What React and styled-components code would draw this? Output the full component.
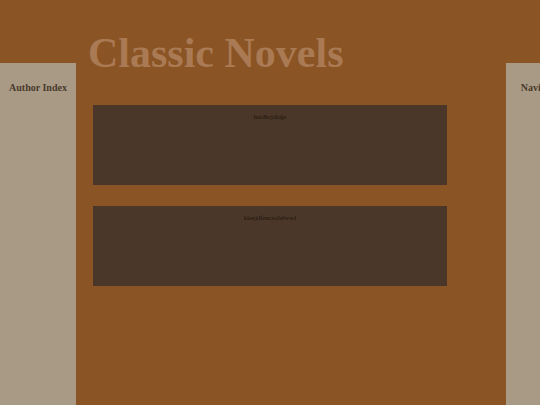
import React from "react";
import styled, { createGlobalStyle } from "styled-components";

const Global = createGlobalStyle`
  html, body {
    margin: 0;
    padding: 0;
    background: #8b5424;
    overflow: hidden;
  }
  body {
    font-family: "Liberation Serif", "Times New Roman", serif;
  }
`;

const Page = styled.div`
  display: flex;
  flex-direction: column;
  min-height: 100vh;
  width: 582px;
`;

const Header = styled.header`
  height: 63px;
  padding-left: 88px;
  position: relative;
  z-index: 1;
`;

const Title = styled.h1`
  margin: 0;
  padding-top: 29px;
  font-size: 42px;
  line-height: 48px;
  font-weight: bold;
  color: #a97a54;
  white-space: nowrap;
`;

const Layout = styled.div`
  flex: 1;
  display: flex;
  flex-direction: row;
`;

const Sidebar = styled.aside`
  flex: 0 0 76px;
  background: #a89a85;
  padding-top: 19px;
  text-align: center;
`;

const SideTitle = styled.h3`
  margin: 0;
  font-size: 10px;
  line-height: 12px;
  font-weight: bold;
  color: #4a3a2c;
  white-space: nowrap;
`;

const Main = styled.main`
  flex: 0 0 430px;
  padding: 42px 0 0 17px;
  box-sizing: border-box;
  display: flex;
  flex-direction: column;
  gap: 21px;
`;

const Card = styled.section`
  width: 354px;
  height: 80px;
  background: #4b3729;
  padding-top: 8px;
  box-sizing: border-box;
  text-align: center;
`;

const CardTitle = styled.p`
  margin: 0;
  font-size: 6.7px;
  line-height: 8px;
  color: #21150d;
`;

const novels = ["hsidhcjdidje", "klenjdfencsolelwwf"];

const App = () => {
  return (
    <>
      <Global />
      <Page>
        <Header>
          <Title>Classic Novels</Title>
        </Header>
        <Layout>
          <Sidebar>
            <SideTitle>Author Index</SideTitle>
          </Sidebar>
          <Main>
            {novels.map((name) => (
              <Card key={name}>
                <CardTitle>{name}</CardTitle>
              </Card>
            ))}
          </Main>
          <Sidebar>
            <SideTitle>Navigation</SideTitle>
          </Sidebar>
        </Layout>
      </Page>
    </>
  );
};

export default App;
